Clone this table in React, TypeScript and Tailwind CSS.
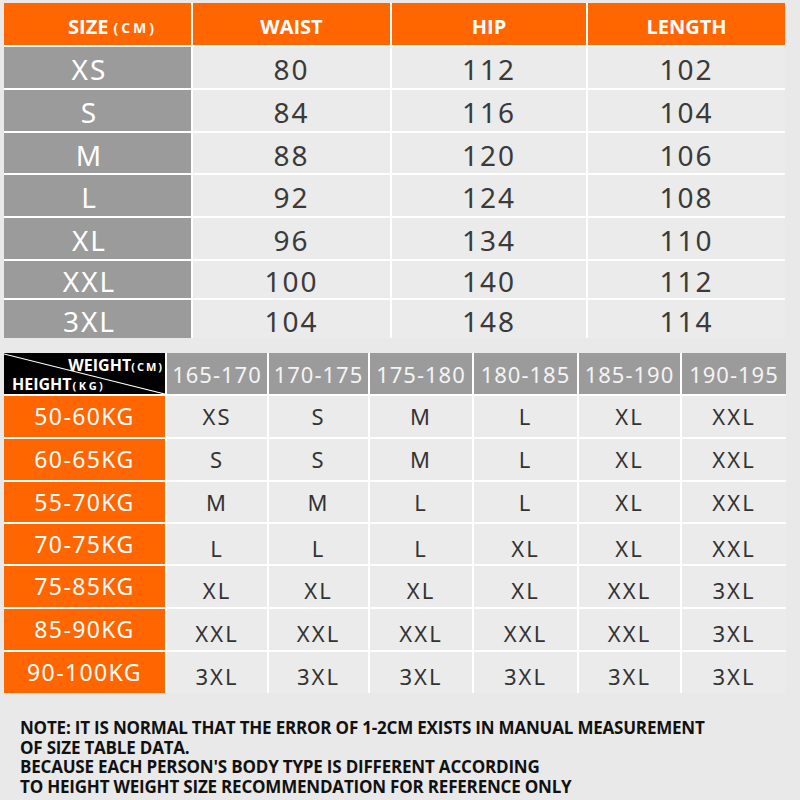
const sizeRows = [
  ["XS", "80", "112", "102"],
  ["S", "84", "116", "104"],
  ["M", "88", "120", "106"],
  ["L", "92", "124", "108"],
  ["XL", "96", "134", "110"],
  ["XXL", "100", "140", "112"],
  ["3XL", "104", "148", "114"],
];

const heights = ["165-170", "170-175", "175-180", "180-185", "185-190", "190-195"];

const weightRows = [
  ["50-60KG", "XS", "S", "M", "L", "XL", "XXL"],
  ["60-65KG", "S", "S", "M", "L", "XL", "XXL"],
  ["55-70KG", "M", "M", "L", "L", "XL", "XXL"],
  ["70-75KG", "L", "L", "L", "XL", "XL", "XXL"],
  ["75-85KG", "XL", "XL", "XL", "XL", "XXL", "3XL"],
  ["85-90KG", "XXL", "XXL", "XXL", "XXL", "XXL", "3XL"],
  ["90-100KG", "3XL", "3XL", "3XL", "3XL", "3XL", "3XL"],
];

const sans = "font-['Noto_Sans',sans-serif]";
const bold = "font-['Open_Sans',sans-serif] font-bold";

function SizeTable() {
  return (
    <div className="ml-[4px] mt-[3px] grid w-fit grid-cols-[187px_197px_194px_197px] grid-rows-[42px_41px_41px_40px_41px_41px_37px_38px] gap-[2px] bg-white">
      <div className={`flex items-center bg-[#ff6600] pl-[64px] pt-[6px] text-white ${bold}`}>
        <span className="text-[20px]">SIZE</span>
        <span className="ml-[5px] text-[14px] tracking-[3px]">(CM)</span>
      </div>
      {["WAIST", "HIP", "LENGTH"].map((h) => (
        <div key={h} className={`flex items-center justify-center bg-[#ff6600] pt-[6px] text-[20px] text-white ${bold}`}>
          {h}
        </div>
      ))}
      {sizeRows.map((row) =>
        row.map((v, i) => (
          <div
            key={row[0] + i}
            className={`flex items-center justify-center pt-[3px] text-[28px] tracking-[2px] ${sans} ${
              i === 0 ? "bg-[#9b9b9b] pr-[16px] text-white" : "bg-[#ebebeb] text-[#3a3a3a]"
            }`}
          >
            {v}
          </div>
        ))
      )}
    </div>
  );
}

function Corner() {
  return (
    <div className={`relative bg-black text-white ${bold}`}>
      <svg className="absolute inset-0" width="161" height="41" viewBox="0 0 161 41">
        <line x1="0" y1="1" x2="161" y2="41" stroke="#fff" strokeWidth="1.2" />
      </svg>
      <div className="absolute right-[1px] top-[4px] flex items-baseline">
        <span className="text-[16px] leading-none">WEIGHT</span>
        <span className="text-[11px] leading-none tracking-[2px]">(CM)</span>
      </div>
      <div className="absolute bottom-[2px] left-[8px] flex items-baseline">
        <span className="text-[16px] leading-none">HEIGHT</span>
        <span className="ml-[1px] text-[11px] leading-none tracking-[2.5px]">(KG)</span>
      </div>
    </div>
  );
}

function WeightTable() {
  return (
    <div className="ml-[4px] mt-[15px] grid w-fit grid-cols-[161px_100px_99px_102px_103px_101px_104px] grid-rows-[41px_41px_41px_40px_40px_41px_41px_41px] gap-[2px] bg-white">
      <Corner />
      {heights.map((h) => (
        <div key={h} className={`flex items-center justify-center bg-[#9b9b9b] pt-[2px] text-[22px] tracking-[1px] text-[#f4f4f4] ${sans}`}>
          {h}
        </div>
      ))}
      {weightRows.map((row, r) =>
        row.map((v, i) =>
          i === 0 ? (
            <div
              key={row[0]}
              className={`flex items-center justify-center bg-[#ff6600] text-[23px] tracking-[1.4px] text-white ${sans}`}
            >
              {v}
            </div>
          ) : (
            <div
              key={row[0] + i}
              className={`flex items-center justify-center bg-[#ebebeb] text-[22px] tracking-[2px] text-[#333] ${sans} ${
                r >= 3 ? "pt-[8px]" : ""
              }`}
            >
              {v}
            </div>
          )
        )
      )}
    </div>
  );
}

export default function App() {
  return (
    <div className="h-[800px] w-[800px] overflow-hidden bg-[#e9e9e9]">
      <SizeTable />
      <WeightTable />
      <div className="ml-[20px] mt-[25px] font-['Open_Sans',sans-serif] text-[17px] font-bold leading-[19.5px] tracking-[-0.2px] text-[#111]">
        <div>NOTE: IT IS NORMAL THAT THE ERROR OF 1-2CM EXISTS IN MANUAL MEASUREMENT</div>
        <div>OF SIZE TABLE DATA.</div>
        <div>BECAUSE EACH PERSON'S BODY TYPE IS DIFFERENT ACCORDING</div>
        <div>TO HEIGHT WEIGHT SIZE RECOMMENDATION FOR REFERENCE ONLY</div>
      </div>
    </div>
  );
}
